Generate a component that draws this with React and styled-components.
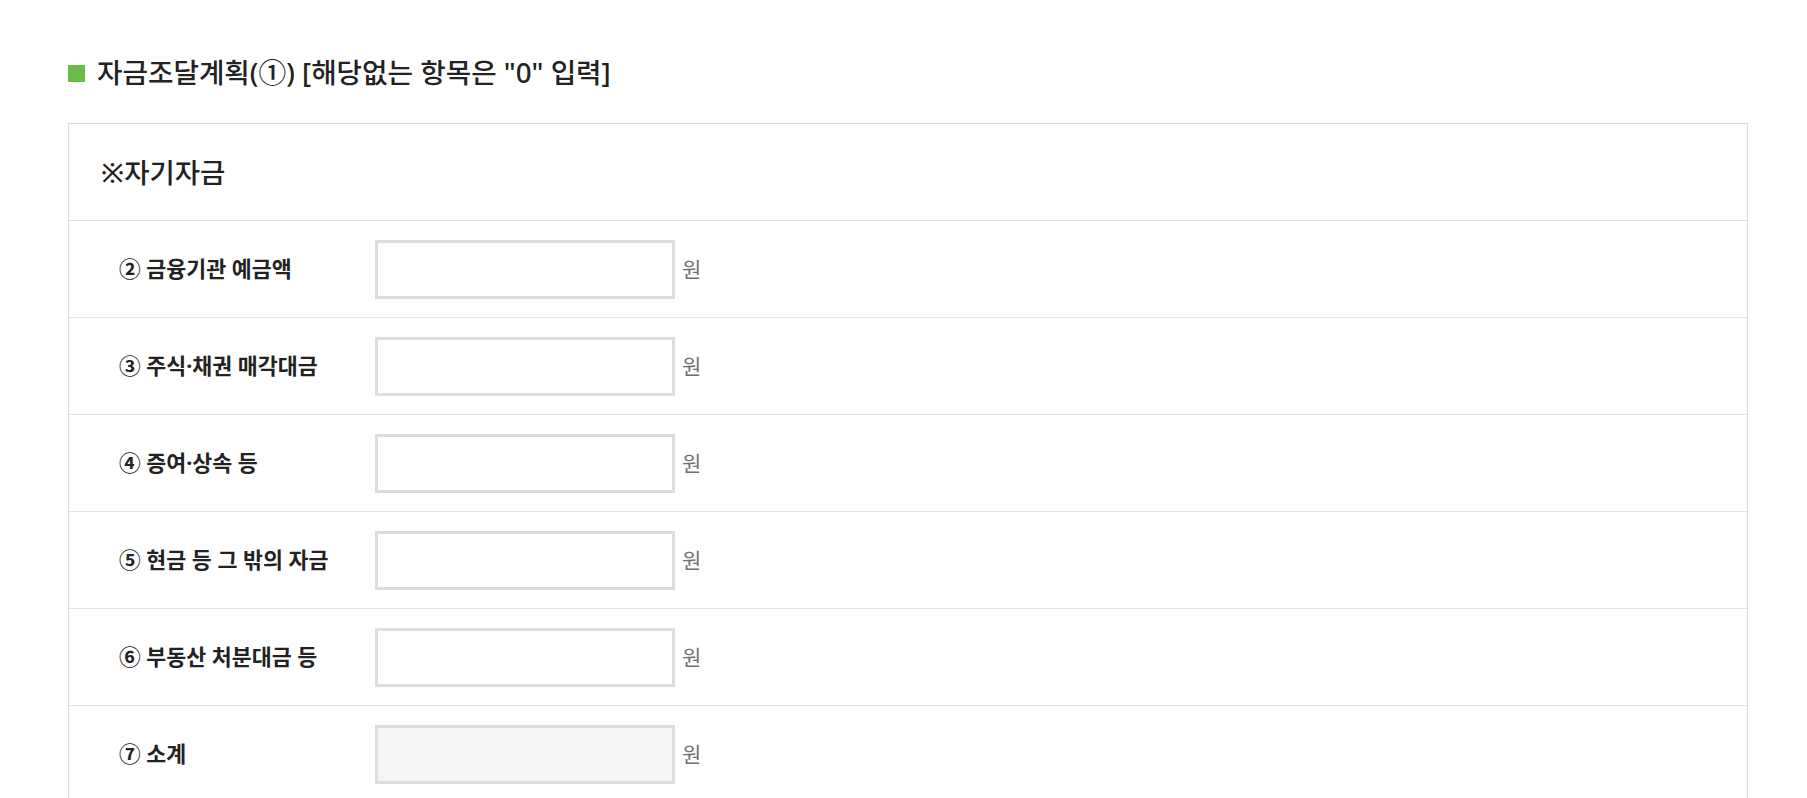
import React from "react";
import styled, { createGlobalStyle } from "styled-components";

const GlobalStyle = createGlobalStyle`
  html, body {
    margin: 0;
    padding: 0;
    background: #ffffff;
  }
  body {
    font-family: "Noto Sans", "Noto Sans CJK KR", sans-serif;
    color: #222222;
  }
  * { box-sizing: border-box; }
`;

const Page = styled.div`
  padding: 54px 0 0 68px;
  width: 1748px;
`;

const Title = styled.h2`
  display: flex;
  align-items: center;
  gap: 12px;
  margin: 0 0 33px;
  height: 36px;
  font-size: 27.7px;
  line-height: 36px;
  font-weight: 500;
  color: #222222;
`;

const Bullet = styled.span`
  display: block;
  width: 17px;
  height: 17px;
  margin-top: 2px;
  background: #67bd45;
  flex: none;
`;

const Box = styled.section`
  border: 1px solid #dddddd;
  width: 1680px;
`;

const SectionHead = styled.div`
  display: flex;
  align-items: center;
  height: 97px;
  padding-left: 32px;
  padding-bottom: 2px;
  border-bottom: 1px solid #e2e2e2;
  font-size: 27.5px;
  font-weight: 500;
  color: #222222;
`;

const Row = styled.div`
  display: flex;
  align-items: center;
  height: 97px;
  border-bottom: 1px solid #e2e2e2;
`;

const Label = styled.div`
  width: 306px;
  padding-left: 50px;
  padding-bottom: 3px;
  font-size: 21.7px;
  font-weight: 700;
  color: #222222;
  flex: none;
`;

const Amount = styled.input`
  width: 300px;
  height: 59px;
  margin: 1px 0 0;
  border: 3px solid #dddddd;
  background: ${(p) => (p.readOnly ? "#f5f5f5" : "#ffffff")};
  outline: none;
  padding: 0 10px;
  font-family: inherit;
  font-size: 18px;
  flex: none;
`;

const Unit = styled.span`
  margin-left: 7px;
  padding-bottom: 3px;
  font-size: 21px;
  font-weight: 400;
  color: #707070;
`;

const items = [
  { label: "② 금융기관 예금액" },
  { label: "③ 주식·채권 매각대금" },
  { label: "④ 증여·상속 등" },
  { label: "⑤ 현금 등 그 밖의 자금" },
  { label: "⑥ 부동산 처분대금 등" },
  { label: "⑦ 소계", readOnly: true },
];

export default function App() {
  return (
    <>
      <GlobalStyle />
      <Page>
        <Title>
          <Bullet />
          자금조달계획(①) [해당없는 항목은 "0" 입력]
        </Title>
        <Box>
          <SectionHead>※자기자금</SectionHead>
          {items.map((it) => (
            <Row key={it.label}>
              <Label>{it.label}</Label>
              <Amount type="text" readOnly={!!it.readOnly} defaultValue="" />
              <Unit>원</Unit>
            </Row>
          ))}
        </Box>
      </Page>
    </>
  );
}
